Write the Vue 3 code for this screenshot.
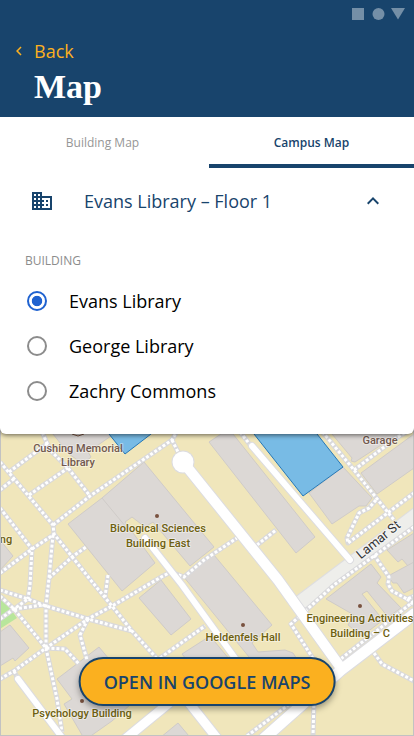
<script setup>
import { ref } from 'vue'

const tabs = ['Building Map', 'Campus Map']
const activeTab = ref('Campus Map')
const expanded = ref(true)
const buildings = ['Evans Library', 'George Library', 'Zachry Commons']
const selected = ref('Evans Library')

const footprints = [
  '40,424 53,434 69,454 83,464 91,457 88,452 111,436 104,424',
  '144,462 214,547 190,566 153,522 145,527 132,517 125,522 155,563 122,591 68,524 102,498',
  '183,576 214,555 272,625 252,643 258,652 285,650 293,653 310,680 240,690 258,668',
  '161,580 191,619 171,635 139,598',
  '0,632 10,625 29,648 15,661 13,658 0,666',
  '99,647 140,696 112,721 85,740 64,704 72,699 57,679',
  '178,723 194,742 155,742',
  '0,540 13,556 0,570',
  '209,442 221,434 233,434 315,537 296,553',
  '309,493 343,467 372,498 366,506 359,506 332,524',
  '326,424 332,434 352,458 351,461 355,462 398,434 398,424',
  '361,473 414,434 414,468 377,494',
  '387,550 398,562 402,559 414,573 414,533',
  '326,599 371,564 381,577 377,583 401,608 388,617 367,591 362,594 383,620 362,636 348,625 354,615',
  '388,576 414,562 414,588 404,593 397,583 393,583',
  '182,654 210,636 235,666 200,676'
]

const highlights = [
  '101,424 109,434 125,454 151,434 163,424',
  '246,424 254,434 303,496 343,467 317,434 309,424'
]

const footpaths = [
  'M0 462L53 525L54 534L93 583L112 606L132 631L160 662',
  'M53 525L90 496L172 440L181 424',
  'M172 440L178 452',
  'M37 424L43 434L50 450L68 468L90 496',
  'M0 490L15 478',
  'M9 472L48 443',
  'M29 495L68 468',
  'M0 508L32 549L30 585L28 599',
  'M0 573L32 549L53 535L49 578L46 606L46 648',
  'M49 578L72 557L86 547',
  'M108 575L105 597',
  'M0 590L28 599L43 605L88 619L132 631',
  'M0 619L14 609L28 599',
  'M0 596L14 609L46 648L65 649L79 664',
  'M14 609L43 605',
  'M0 679L14 671L46 648L88 619L112 606L163 576L171 572L184 577L204 560L237 538',
  'M14 671L18 679',
  'M88 619L80 635L87 660',
  'M46 648L57 699L62 732',
  'M160 658L205 626',
  'M234 424L251 446',
  'M257 545L276 530',
  'M316 424L354 470L394 520',
  'M354 470L396 438L406 432',
  'M376 500L369 508L359 513L347 538L348 543L414 493',
  'M414 527L334 585L291 624L314 660',
  'M374 555L389 577L388 584L392 591L407 599L414 596',
  'M407 599L414 605',
  'M414 601L384 625L342 658L334 664',
  'M374 653L382 664L414 681',
  'M247 736L296 699',
  'M314 700L313 736'
]

const roads = [
  { d: 'M183 462L278 580L341 668', w: 12 },
  { d: 'M252 446L350 560', w: 8 },
  { d: 'M145 538L182 585L240 665', w: 8 },
  { d: 'M18 679L64 740', w: 8 },
  { d: 'M124 740L174 699', w: 11 },
  { d: 'M260 742L341 670L414 614', w: 13 },
  { d: 'M186 699L220 742', w: 11 }
]

const dots = [[157, 516], [243, 625], [360, 606], [82, 701]]

const labels = [
  { x: 78, y: 452, t: 'Cushing Memorial', c: 'brown' },
  { x: 78, y: 466, t: 'Library', c: 'brown' },
  { x: 380, y: 444, t: 'Garage', c: 'brown' },
  { x: 158, y: 532, t: 'Biological Sciences', c: 'olive' },
  { x: 158, y: 547, t: 'Building East', c: 'olive' },
  { x: 6, y: 543, t: 'ng', c: 'olive' },
  { x: 243, y: 641, t: 'Heldenfels Hall', c: 'olive' },
  { x: 360, y: 622, t: 'Engineering Activities', c: 'olive' },
  { x: 360, y: 637, t: 'Building – C', c: 'olive' },
  { x: 82, y: 717, t: 'Psychology Building', c: 'olive' }
]
</script>

<template>
  <div class="screen">
    <header class="header">
      <div class="status">
        <svg width="54" height="12" viewBox="0 0 54 12" aria-hidden="true">
          <rect width="12" height="12" />
          <circle cx="26.500" cy="6" r="6" />
          <path d="M39 0h14l-7 11.500z" />
        </svg>
      </div>
      <a class="back" href="#">
        <svg width="18" height="18" viewBox="0 0 24 24" aria-hidden="true">
          <path d="M15.410 7.410L14 6l-6 6 6 6 1.410-1.410L10.830 12z" />
        </svg>
        <span>Back</span>
      </a>
      <h1>Map</h1>
    </header>

    <main class="content">
      <section class="panel">
        <nav class="tabs">
          <button
            v-for="tab in tabs"
            :key="tab"
            type="button"
            class="tab"
            :class="{ active: tab === activeTab }"
            @click="activeTab = tab"
          >{{ tab }}</button>
        </nav>

        <button type="button" class="location" :aria-expanded="expanded" @click="expanded = !expanded">
          <svg width="24" height="24" viewBox="0 0 24 24" aria-hidden="true">
            <path d="M12 7V3H2v18h20V7H12zM6 19H4v-2h2v2zm0-4H4v-2h2v2zm0-4H4V9h2v2zm0-4H4V5h2v2zm4 12H8v-2h2v2zm0-4H8v-2h2v2zm0-4H8V9h2v2zm0-4H8V5h2v2zm10 12h-8v-2h2v-2h-2v-2h2v-2h-2V9h8v10zm-2-8h-2v2h2v-2zm0 4h-2v2h2v-2z" />
          </svg>
          <span class="location-name">Evans Library – Floor 1</span>
          <svg width="24" height="24" viewBox="0 0 24 24" aria-hidden="true">
            <path d="M12 8l-6 6 1.410 1.410L12 10.830l4.590 4.580L18 14z" />
          </svg>
        </button>

        <fieldset v-show="expanded" class="buildings">
          <legend>BUILDING</legend>
          <label v-for="name in buildings" :key="name" class="option">
            <input v-model="selected" type="radio" name="building" :value="name" />
            <span>{{ name }}</span>
          </label>
        </fieldset>
      </section>

      <section class="map">
        <svg class="canvas" viewBox="1 426 412 309" preserveAspectRatio="xMidYMax slice" role="img" aria-label="Campus map">
          <rect class="ground" x="0" y="424" width="414" height="312" />
          <polygon class="lawn" points="0,594 17,618 0,629" />
          <polygon v-for="(p, i) in footprints" :key="'b' + i" class="footprint" :points="p" />
          <path class="footprint-line" d="M102 498L126 527" />
          <path class="street-edge" d="M297 605L418 514" />
          <path class="street" d="M297 605L418 514" />
          <path v-for="(d, i) in footpaths" :key="'c' + i" class="path-base" :d="d" />
          <path v-for="(d, i) in footpaths" :key="'p' + i" class="path-dash" :d="d" />
          <circle class="road-edge-fill" cx="183" cy="462" r="11.500" />
          <path v-for="(r, i) in roads" :key="'e' + i" class="road-edge" :d="r.d" :stroke-width="r.w" />
          <path v-for="(r, i) in roads" :key="'r' + i" class="road" :d="r.d" :stroke-width="r.w - 2" />
          <circle class="road-fill" cx="183" cy="462" r="10.500" />
          <polygon v-for="(p, i) in highlights" :key="'h' + i" class="highlight" :points="p" />
          <path class="marker" d="M72 434l3 1 3 1 3-1 3-1" />
          <circle v-for="(d, i) in dots" :key="'d' + i" class="dot" :cx="d[0]" :cy="d[1]" r="2" />
          <text v-for="l in labels" :key="l.t" class="label" :class="l.c" :x="l.x" :y="l.y">{{ l.t }}</text>
          <text class="street-name" transform="translate(381 543) rotate(-39)">Lamar St</text>
        </svg>
        <button type="button" class="open">OPEN IN GOOGLE MAPS</button>
      </section>
    </main>
  </div>
</template>

<style>
body {
  margin: 0;
}
</style>

<style scoped>
.screen {
  display: flex;
  flex-direction: column;
  min-height: 100vh;
  font-family: "Open Sans", "Noto Sans", sans-serif;
  background: #fff;
}

.header {
  position: relative;
  z-index: 2;
  box-sizing: border-box;
  height: 117px;
  background: #18446c;
}

.status {
  display: flex;
  justify-content: flex-end;
  padding: 8px 8px 0 0;
}

.status svg {
  fill: #748fa7;
}

.back {
  display: flex;
  align-items: center;
  gap: 6px;
  width: max-content;
  margin-top: 19px;
  padding-left: 10px;
  color: #fcb01f;
  font-size: 18px;
  line-height: 24px;
  text-decoration: none;
}

.back svg {
  fill: currentColor;
}

h1 {
  margin: 4px 0 0 34px;
  color: #fff;
  font-family: "Liberation Serif", serif;
  font-size: 34px;
  font-weight: 700;
  line-height: 40px;
}

.content {
  display: flex;
  flex: 1;
  flex-direction: column;
}

.panel {
  position: relative;
  z-index: 1;
  padding-bottom: 21px;
  border-radius: 0 0 6px 6px;
  background: #fff;
  box-shadow: 0 1px 5px rgba(0, 0, 0, 0.6);
}

button {
  font-family: inherit;
  cursor: pointer;
}

.tabs {
  display: grid;
  grid-template-columns: 1fr 1fr;
  gap: 4px;
}

.tab {
  height: 51px;
  padding: 4px 0 0;
  border: 0;
  border-bottom: 4px solid transparent;
  background: none;
  color: #969696;
  font-size: 12px;
}

.tab.active {
  border-bottom-color: #18446c;
  color: #18446c;
  font-weight: 600;
}

.location {
  display: flex;
  align-items: center;
  width: 100%;
  height: 65px;
  padding: 0 29px 0 30px;
  border: 0;
  background: none;
  color: #18446c;
  font-size: 18px;
  line-height: 24px;
  text-align: left;
}

.location svg {
  fill: currentColor;
}

.location-name {
  flex: 1;
  padding-left: 30px;
}

.buildings {
  margin: 0;
  padding: 0 25px;
  border: 0;
}

legend {
  padding: 19px 0 8px;
  color: #8c8c8c;
  font-size: 12px;
  line-height: 18px;
}

.option {
  display: flex;
  align-items: center;
  gap: 22px;
  height: 45px;
  padding-left: 2px;
  color: #000;
  font-size: 18px;
}

.option input {
  box-sizing: border-box;
  width: 20px;
  height: 20px;
  margin: 0;
  border: 2px solid #8c8c8c;
  border-radius: 50%;
  appearance: none;
  background: #fff;
}

.option input:checked {
  border-color: #1f62d0;
  background: radial-gradient(circle closest-side, #1f62d0 60%, #fff 70%);
}

.map {
  position: relative;
  box-sizing: border-box;
  flex: 1;
  min-height: 240px;
  margin-top: -8px;
  overflow: hidden;
  border: solid #c2c2c2;
  border-width: 0 1px 1px;
}

.canvas {
  position: absolute;
  inset: 0;
  width: 100%;
  height: 100%;
}

.ground { fill: #f0e6bb; }
.lawn { fill: #b8e69c; }
.footprint { fill: #dcd8d5; stroke: #cfcbc8; stroke-width: 1; }
.footprint-line { fill: none; stroke: #cfcbc8; stroke-width: 1; }
.street-edge { fill: none; stroke: #dddddf; stroke-width: 16; }
.street { fill: none; stroke: #eeeeeb; stroke-width: 14; }
.path-base { fill: none; stroke: #d9d9dc; stroke-width: 5; stroke-linejoin: round; }
.path-dash { fill: none; stroke: #fff; stroke-width: 3; stroke-dasharray: 3 2; }
.road-edge { fill: none; stroke: #dcdce0; stroke-linecap: round; stroke-linejoin: round; }
.road { fill: none; stroke: #fff; stroke-linecap: round; stroke-linejoin: round; }
.road-edge-fill { fill: #dcdce0; }
.road-fill { fill: #fff; }
.highlight { fill: #78bbe5; stroke: #2678b8; stroke-width: 1; }
.marker { fill: none; stroke: #79523f; stroke-width: 1; }
.dot { fill: #79523f; }

.label,
.street-name {
  font-family: Roboto, "Open Sans", sans-serif;
  font-size: 11px;
  font-weight: 500;
  text-anchor: middle;
  paint-order: stroke;
  stroke: rgba(255, 255, 255, 0.4);
  stroke-width: 2px;
  stroke-linejoin: round;
}

.brown { fill: #72594e; }
.olive { fill: #6d6010; }

.street-name {
  fill: #333;
  font-size: 13px;
  font-weight: 400;
}

.open {
  position: absolute;
  bottom: 29px;
  left: 50%;
  height: 49px;
  padding: 0 23px;
  border: 2px solid #18446c;
  border-radius: 25px;
  background: #fbb01f;
  box-shadow: 0 3px 6px rgba(0, 0, 0, 0.35);
  color: #18446c;
  font-size: 18px;
  font-weight: 600;
  white-space: nowrap;
  transform: translateX(-50%);
}
</style>
